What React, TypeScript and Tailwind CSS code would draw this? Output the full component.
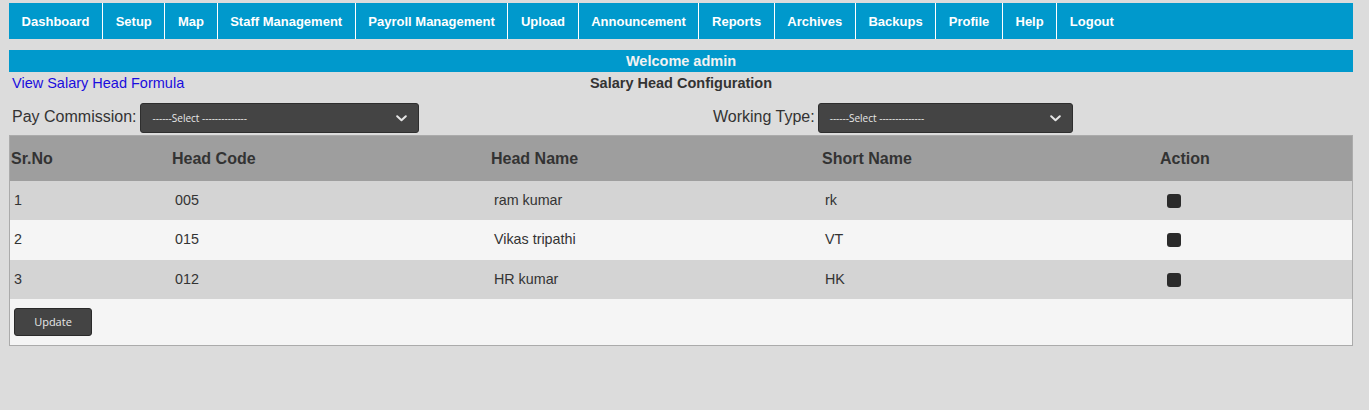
import React from "react";

const navItems = [
  "Dashboard",
  "Setup",
  "Map",
  "Staff Management",
  "Payroll Management",
  "Upload",
  "Announcement",
  "Reports",
  "Archives",
  "Backups",
  "Profile",
  "Help",
  "Logout",
];

const rows = [
  { sr: "1", code: "005", name: "ram kumar", short: "rk" },
  { sr: "2", code: "015", name: "Vikas tripathi", short: "VT" },
  { sr: "3", code: "012", name: "HR kumar", short: "HK" },
];

function Chevron() {
  return (
    <svg width="11" height="7" viewBox="0 0 11 7" className="shrink-0">
      <path d="M1.2 1.2 L5.5 5.3 L9.8 1.2" fill="none" stroke="#e6e6e6" strokeWidth="2" strokeLinecap="round" strokeLinejoin="round" />
    </svg>
  );
}

function Select({ width }: { width: string }) {
  return (
    <div
      className={`${width} h-[30px] bg-[#444444] border border-[#2e2e2e] rounded-[3px] flex items-center justify-between pl-[11px] pr-[11px]`}
    >
      <span className="text-[10px] text-[#e8e8e8] font-['Open_Sans',sans-serif] leading-none">
        ------Select --------------
      </span>
      <Chevron />
    </div>
  );
}

const cols = "grid grid-cols-[160px_319px_331px_338px_1fr]";

export default function App() {
  return (
    <div className="min-h-[410px] bg-[#dcdcdc] pt-[3px] pl-[9px] pr-[16px] font-['Liberation_Sans',Arial,sans-serif] text-[#333333]">
      <nav className="h-[36px] bg-[#0099cc] flex">
        {navItems.map((item) => (
          <div
            key={item}
            className={`h-full flex items-center pt-[1px] px-[12.6px] text-[13px] font-bold text-white ${item !== "Logout" ? "border-r border-white" : ""}`}
          >
            {item}
          </div>
        ))}
      </nav>

      <div className="mt-[11px] h-[22px] bg-[#0099cc] flex items-center justify-center pt-[2px] text-[14.5px] font-bold text-[#f2f2f2]">
        Welcome admin
      </div>

      <div className="h-[22px] grid grid-cols-[1fr_auto_1fr] items-center pt-[1px]">
        <a className="pl-[3px] text-[14.5px] text-[#1a0dde] cursor-pointer">View Salary Head Formula</a>
        <div className="text-[14.5px] font-bold text-[#333333]">Salary Head Configuration</div>
        <div />
      </div>

      <div className="flex pt-[9px] pb-[2px]">
        <div className="w-[672px] flex items-center pl-[3px] gap-[4px]">
          <span className="text-[16px] text-[#333333] -mt-[3px]">Pay Commission:</span>
          <Select width="w-[279px]" />
        </div>
        <div className="flex items-center pl-[32px] gap-[3px]">
          <span className="text-[16px] text-[#333333] -mt-[3px]">Working Type:</span>
          <Select width="w-[255px]" />
        </div>
      </div>

      <div className="border border-[#ababab]">
        <div className={`${cols} h-[45px] bg-[#9e9e9e] items-center text-[16px] font-bold text-[#333333]`}>
          <div className="pl-[1px]">Sr.No</div>
          <div className="pl-[2px]">Head Code</div>
          <div className="pl-[2px]">Head Name</div>
          <div className="pl-[2px]">Short Name</div>
          <div className="pl-[2px]">Action</div>
        </div>
        {rows.map((r, i) => (
          <div
            key={r.sr}
            className={`${cols} ${i === 1 ? "h-[40px] bg-[#f5f5f5]" : "h-[39px] bg-[#d4d4d4]"} items-center text-[14.3px] text-[#333333]`}
          >
            <div className="pl-[4px]">{r.sr}</div>
            <div className="pl-[5px]">{r.code}</div>
            <div className="pl-[5px]">{r.name}</div>
            <div className="pl-[5px]">{r.short}</div>
            <div className="pl-[9px] flex">
              <div className="w-[14px] h-[14px] rounded-[3px] bg-[#2b2b2b]" />
            </div>
          </div>
        ))}
        <div className="h-[46px] bg-[#f5f5f5] pt-[9px] pl-[4px]">
          <button className="w-[78px] h-[28px] bg-[#444444] border border-[#2a2a2a] rounded-[3px] text-[11px] text-[#e8e8e8] font-['Open_Sans',sans-serif] flex items-center justify-center">
            Update
          </button>
        </div>
      </div>
    </div>
  );
}
